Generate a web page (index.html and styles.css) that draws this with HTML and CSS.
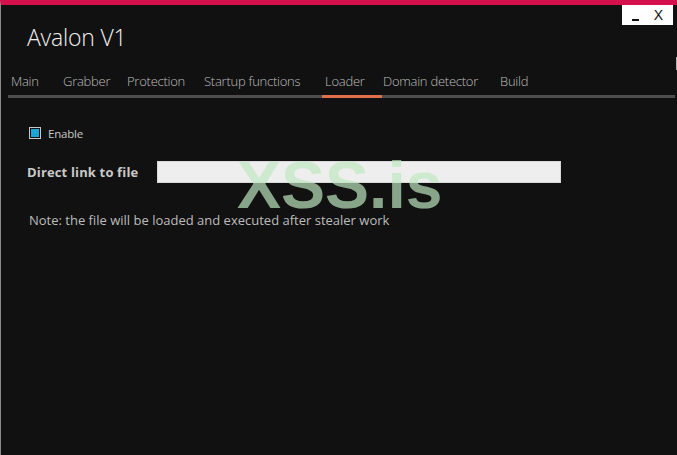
FILE: index.html
```html
<!DOCTYPE html>
<html>
<head>
<meta charset="utf-8">
<link rel="stylesheet" href="styles.css">
</head>
<body>
<div class="app">
  <div class="header">
    <div class="title">Avalon V1</div>
    <div class="winbtns"><span class="min"></span><span class="close">X</span></div>
  </div>
  <div class="tabbar">
    <div class="tab t-main">Main</div>
    <div class="tab t-grab">Grabber</div>
    <div class="tab t-prot">Protection</div>
    <div class="tab t-start">Startup functions</div>
    <div class="tab active t-load">Loader</div>
    <div class="tab t-dom">Domain detector</div>
    <div class="tab t-build">Build</div>
  </div>
  <div class="content">
    <label class="check"><span class="box"><span class="fill"></span></span><span class="check-label">Enable</span></label>
    <div class="field">
      <span class="field-label">Direct link to file</span>
      <input class="field-input" type="text">
    </div>
    <div class="note">Note: the file will be loaded and executed after stealer work</div>
    <div class="watermark">XSS.is</div>
  </div>
  <div class="scrollnub"></div>
</div>
</body>
</html>
```
FILE: styles.css
```css
html, body {
  margin: 0;
  padding: 0;
  background: #111111;
}
.app {
  position: relative;
  width: 677px;
  height: 455px;
  box-sizing: border-box;
  border-top: 5px solid #d4114a;
  border-left: 1px solid #8a8a8a;
  background: #111111;
  font-family: "Open Sans", "Liberation Sans", sans-serif;
  color: #d0d0d0;
  overflow: hidden;
}
.header {
  display: flex;
  justify-content: space-between;
  align-items: flex-start;
  height: 64px;
}
.title {
  margin-top: 16px;
  margin-left: 26px;
  font-size: 23px;
  font-weight: 300;
  color: #f0f0f0;
  line-height: 32px;
  letter-spacing: -0.2px;
}
.winbtns {
  width: 51px;
  height: 20px;
  margin-right: 4px;
  background: #ffffff;
  display: flex;
  align-items: center;
  justify-content: space-between;
  padding: 0 10px 0 10px;
  box-sizing: border-box;
}
.min {
  width: 7px;
  height: 2px;
  background: #111;
  margin-top: 9px;
}
.close {
  font-family: "Liberation Sans", sans-serif;
  font-size: 14px;
  color: #111;
  line-height: 14px;
}
.tabbar {
  display: flex;
  margin-left: 7px;
  width: 667px;
  border-bottom: 3px solid #4d4d4d;
  height: 26px;
  box-sizing: content-box;
}
.tab {
  box-sizing: border-box;
  flex: none;
  font-size: 13px;
  font-weight: 300;
  color: #bdbdbd;
  line-height: 20px;
  padding: 2px 0 0 3px;
  letter-spacing: -0.25px;
}
.t-main { width: 52px; }
.t-grab { width: 64px; }
.t-prot { width: 77px; }
.t-start { width: 121px; }
.t-load { width: 60px; }
.t-dom { width: 115px; padding-left: 1px; }
.t-build { width: 40px; }
.tab.active {
  border-bottom: 3px solid #e0704c;
  margin-bottom: -3px;
  height: 29px;
}
.content {
  position: relative;
  padding: 28px 0 0 28px;
}
.check {
  display: flex;
  align-items: center;
  gap: 7px;
  height: 14px;
}
.box {
  width: 12px;
  height: 12px;
  border: 1px solid #c8c8c8;
  box-sizing: border-box;
  padding: 1px;
  display: flex;
}
.fill {
  flex: 1;
  background: #1aa7d6;
}
.check-label {
  font-size: 11.5px;
  color: #c8c8c8;
  letter-spacing: -0.2px;
}
.field {
  display: flex;
  align-items: center;
  margin-top: 21px;
  margin-left: -2px;
}
.field-label {
  width: 130px;
  font-size: 13px;
  font-weight: 700;
  color: #c9c9c9;
  letter-spacing: 0.15px;
}
.field-input {
  width: 404px;
  height: 22px;
  box-sizing: border-box;
  margin: 0;
  border: 1px solid #d8d8d8;
  background: #eeeeee;
  padding: 0 4px;
  outline: none;
}
.note {
  margin-top: 28px;
  font-size: 13px;
  color: #bcbcbc;
}
.watermark {
  position: absolute;
  left: 236px;
  top: 63px;
  font-family: "Liberation Sans", Arial, sans-serif;
  font-weight: 700;
  font-size: 66px;
  line-height: 48px;
  color: rgba(190, 232, 192, 0.69);
}
.scrollnub {
  position: absolute;
  right: 0;
  top: 52px;
  width: 1px;
  height: 13px;
  background: #b0b0b0;
}
```
